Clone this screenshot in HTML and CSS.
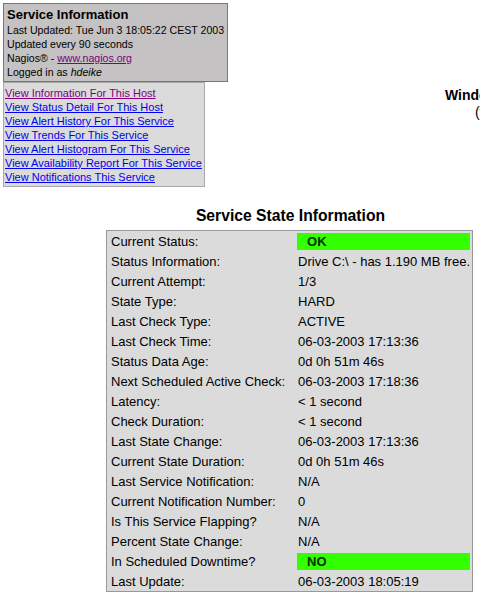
FILE: index.html
```
<!DOCTYPE html>
<html lang="en">
<head>
  <meta charset="UTF-8" />
  <title>Extended Information</title>
  <link rel="stylesheet" href="styles.css">
</head>
<body>
  <div class="page">
    <div class="header">
      <div class="left-col">
        <div class="info-box">
          <div class="info-title">Service Information</div>
          Last Updated: Tue Jun 3 18:05:22 CEST 2003<br>
          Updated every 90 seconds<br>
          Nagios&reg; - <a href="#" class="visited">www.nagios.org</a><br>
          Logged in as <i>hdeike</i>
        </div>
        <div class="link-box">
          <a href="#" class="visited">View Information For This Host</a><br>
          <a href="#">View Status Detail For This Host</a><br>
          <a href="#">View Alert History For This Service</a><br>
          <a href="#">View Trends For This Service</a><br>
          <a href="#">View Alert Histogram For This Service</a><br>
          <a href="#">View Availability Report For This Service</a><br>
          <a href="#">View Notifications This Service</a>
        </div>
      </div>
      <div class="center-col">
        <div class="data-title">Windows 2000 Server</div>
        <div class="data-title sub">(winserver01)</div>
      </div>
    </div>

    <div class="state-section">
      <div class="state-title">Service State Information</div>
      <table class="state-table">
        <tr><td>Current Status:</td><td><div class="status-ok">OK</div></td></tr>
        <tr><td>Status Information:</td><td>Drive C:\ - has 1.190 MB free.</td></tr>
        <tr><td>Current Attempt:</td><td>1/3</td></tr>
        <tr><td>State Type:</td><td>HARD</td></tr>
        <tr><td>Last Check Type:</td><td>ACTIVE</td></tr>
        <tr><td>Last Check Time:</td><td>06-03-2003 17:13:36</td></tr>
        <tr><td>Status Data Age:</td><td>0d 0h 51m 46s</td></tr>
        <tr><td>Next Scheduled Active Check:</td><td>06-03-2003 17:18:36</td></tr>
        <tr><td>Latency:</td><td>&lt; 1 second</td></tr>
        <tr><td>Check Duration:</td><td>&lt; 1 second</td></tr>
        <tr><td>Last State Change:</td><td>06-03-2003 17:13:36</td></tr>
        <tr><td>Current State Duration:</td><td>0d 0h 51m 46s</td></tr>
        <tr><td>Last Service Notification:</td><td>N/A</td></tr>
        <tr><td>Current Notification Number:</td><td>0</td></tr>
        <tr><td>Is This Service Flapping?</td><td>N/A</td></tr>
        <tr><td>Percent State Change:</td><td>N/A</td></tr>
        <tr><td>In Scheduled Downtime?</td><td><div class="status-ok">NO</div></td></tr>
        <tr><td>Last Update:</td><td>06-03-2003 18:05:19</td></tr>
      </table>
    </div>
  </div>
</body>
</html>
```

FILE: styles.css
```
html, body {
  margin: 0;
  overflow: hidden;
  background: #ffffff;
  font-family: "Liberation Sans", Arial, sans-serif;
  color: #000000;
}

.page {
  width: 480px;
  overflow: hidden;
  padding: 3px 0 0 3px;
}

.header {
  display: flex;
  white-space: nowrap;
}

.left-col {
  display: flex;
  flex-direction: column;
  align-items: flex-start;
  flex-shrink: 0;
}

.info-box {
  background-color: #c4c2c2;
  border: 1px solid #777777;
  font-size: 10.6px;
  line-height: 14px;
  padding: 3px 3px 2px 3px;
  width: 217px;
}

.info-title {
  font-size: 13px;
  font-weight: bold;
  line-height: 16px;
}

.link-box {
  background-color: #dbdbdb;
  border: 1px solid #aaaaaa;
  font-size: 11px;
  line-height: 14px;
  padding: 3px 2px 2px 1px;
  width: 197px;
}

a {
  color: #0000ee;
}

a.visited {
  color: #800080;
}

.center-col {
  padding: 84px 0 0 217px;
  text-align: left;
}

.data-title {
  font-size: 14px;
  font-weight: bold;
  line-height: 17px;
}

.data-title.sub {
  padding-left: 30px;
  font-weight: normal;
}

.state-section {
  padding: 20px 0 0 103px;
  width: 369px;
}

.state-title {
  text-align: center;
  font-size: 15.7px;
  font-weight: bold;
  line-height: 18px;
  margin-bottom: 5px;
}

.state-table {
  border: 1px solid #999999;
  background-color: #dbdbdb;
  border-collapse: collapse;
  width: 367px;
  font-size: 13px;
}

.state-table td {
  height: 20px;
  padding: 0 0 0 4px;
  white-space: nowrap;
}

.state-table td:first-child {
  width: 186px;
}

.state-table td:last-child {
  padding-right: 2px;
}

.status-ok {
  background-color: #33ff00;
  font-weight: bold;
  color: #003300;
  padding: 1px 10px;
  line-height: 15px;
  margin-left: -1px;
}
```
